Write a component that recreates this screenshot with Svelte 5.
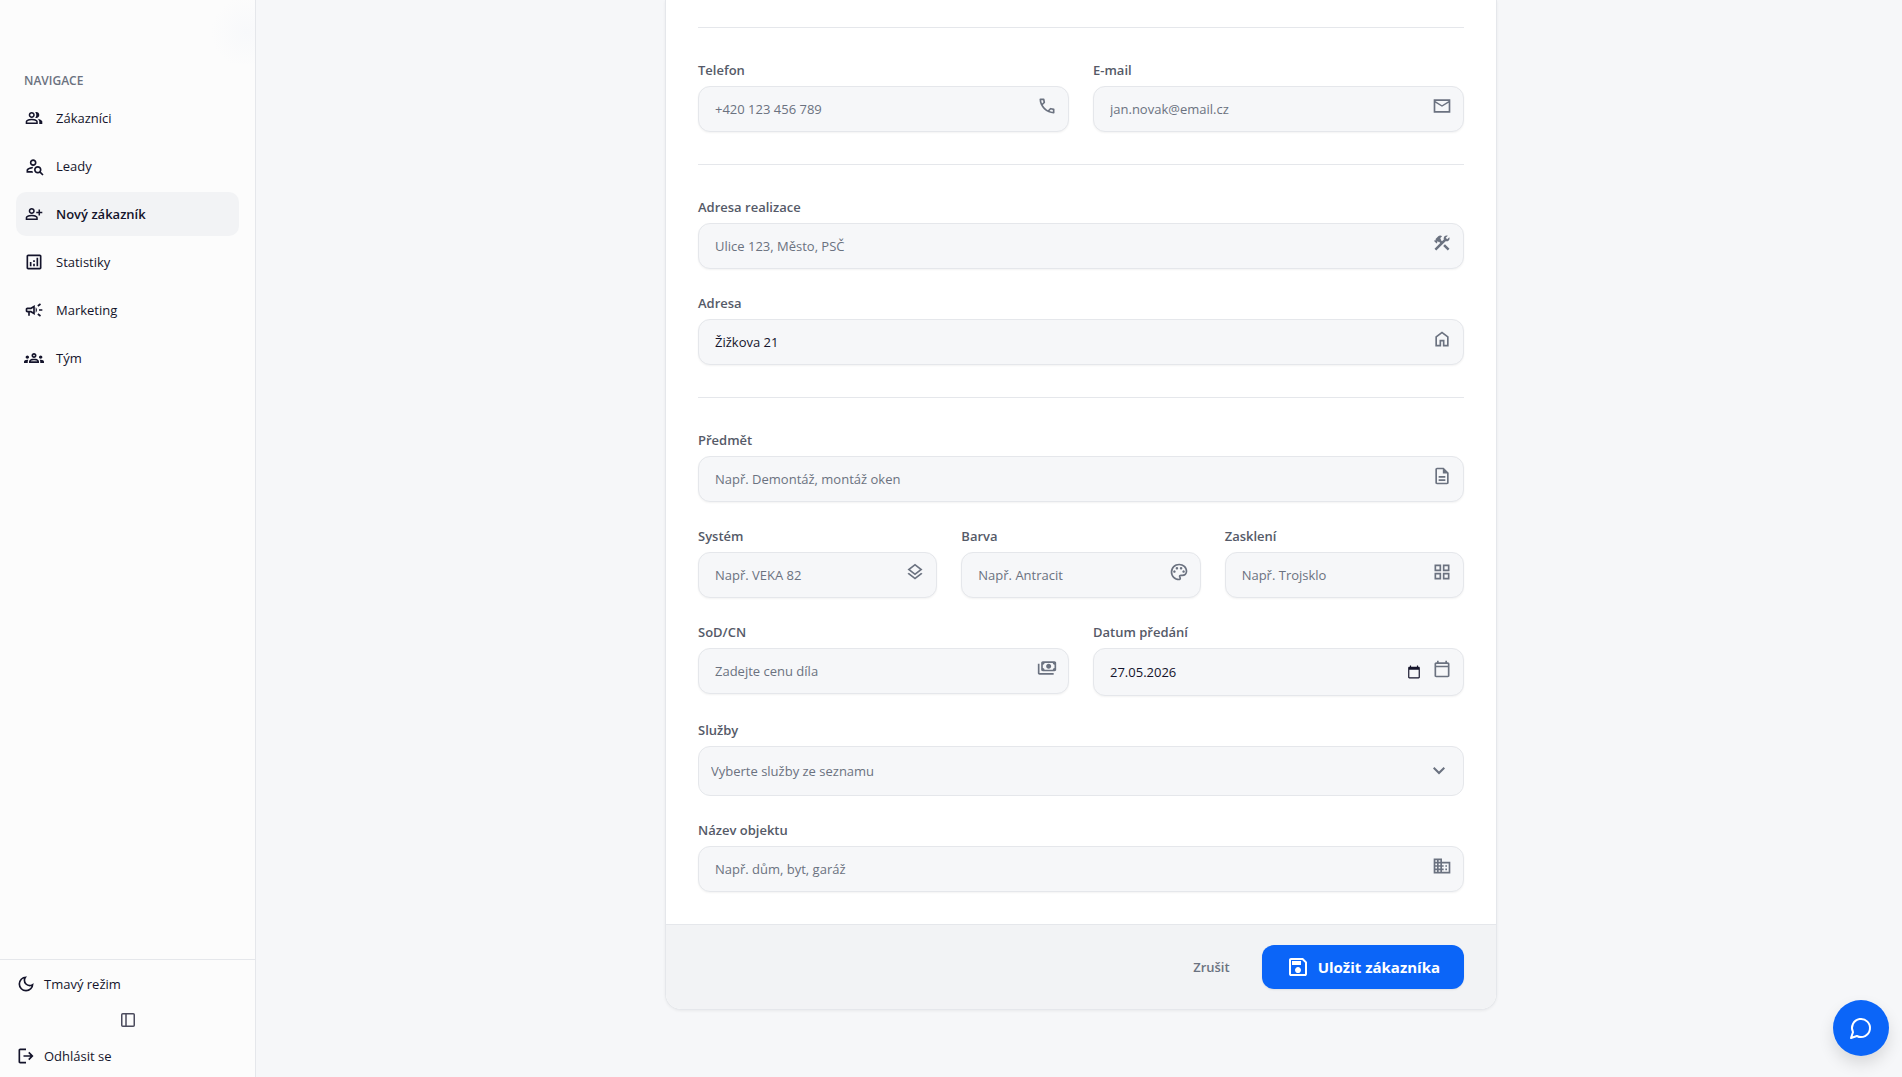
<script>
  const icons = {
    group: 'M40-160v-112q0-34 17.5-62.5T104-378q62-31 126-46.5T360-440q66 0 130 15.5T616-378q29 15 46.5 43.5T680-272v112H40Zm720 0v-120q0-44-24.5-84.5T666-434q51 6 96 20.5t84 35.5q36 20 55 44.5t19 53.5v120H760ZM360-480q-66 0-113-47t-47-113q0-66 47-113t113-47q66 0 113 47t47 113q0 66-47 113t-113 47Zm400-160q0 66-47 113t-113 47q-11 0-28-2.5t-28-5.5q27-32 41.5-71t14.5-81q0-42-14.5-81T544-792q14-5 28-6.5t28-1.5q66 0 113 47t47 113ZM120-240h480v-32q0-11-5.5-20T580-306q-54-27-109-40.5T360-360q-56 0-111 13.5T140-306q-9 5-14.5 14t-5.5 20v32Zm240-320q33 0 56.5-23.5T440-640q0-33-23.5-56.5T360-720q-33 0-56.5 23.5T280-640q0 33 23.5 56.5T360-560Z',
    search: 'M440-480q-66 0-113-47t-47-113q0-66 47-113t113-47q66 0 113 47t47 113q0 66-47 113t-113 47Zm0-80q33 0 56.5-23.5T520-640q0-33-23.5-56.5T440-720q-33 0-56.5 23.5T360-640q0 33 23.5 56.5T440-560ZM884-20 756-148q-21 12-45 20t-51 8q-75 0-127.5-52.5T480-300q0-75 52.5-127.5T660-480q75 0 127.5 52.5T840-300q0 27-8 51t-20 45L940-76l-56 56ZM660-200q42 0 71-29t29-71q0-42-29-71t-71-29q-42 0-71 29t-29 71q0 42 29 71t71 29Zm-540 40v-111q0-34 17-63t47-44q51-26 115-44t142-18q-12 18-20.5 38.5T407-359q-60 5-107 20.5T221-306q-10 5-15.5 14.5T200-271v31h207q5 22 13.5 42t20.5 38H120Z',
    personAdd: 'M720-400v-120H600v-80h120v-120h80v120h120v80H800v120h-80Zm-360-80q-66 0-113-47t-47-113q0-66 47-113t113-47q66 0 113 47t47 113q0 66-47 113t-113 47ZM40-160v-112q0-34 17.5-62.5T104-378q62-31 126-46.5T360-440q66 0 130 15.5T616-378q29 15 46.5 43.5T680-272v112H40Zm80-80h480v-32q0-11-5.5-20T580-306q-54-27-109-40.5T360-360q-56 0-111 13.5T140-306q-9 5-14.5 14t-5.5 20v32Zm240-320q33 0 56.5-23.5T440-640q0-33-23.5-56.5T360-720q-33 0-56.5 23.5T280-640q0 33 23.5 56.5T360-560Z',
    analytics: 'M280-280h80v-200h-80v200Zm320 0h80v-400h-80v400Zm-160 0h80v-120h-80v120Zm0-200h80v-80h-80v80ZM200-120q-33 0-56.5-23.5T120-200v-560q0-33 23.5-56.5T200-840h560q33 0 56.5 23.5T840-760v560q0 33-23.5 56.5T760-120H200Zm0-80h560v-560H200v560Z',
    campaign: 'M720-440v-80h160v80H720Zm48 280-128-96 48-64 128 96-48 64Zm-80-480-48-64 128-96 48 64-128 96ZM200-200v-160h-40q-33 0-56.5-23.5T80-440v-80q0-33 23.5-56.5T160-600h160l200-120v480L320-360h-40v160h-80Zm240-182v-196l-98 58H160v80h182l98 58Zm120 36v-268q27 24 43.5 58.5T620-480q0 41-16.5 75.5T560-346Z',
    groups: 'M0-240v-63q0-43 44-70t116-27q13 0 25 .5t23 2.5q-14 21-21 44t-7 48v65H0Zm240 0v-65q0-32 17.5-58.5T307-410q32-20 76.5-30t96.5-10q53 0 97.5 10t76.5 30q32 20 49 46.5t17 58.5v65H240Zm540 0v-65q0-26-6.5-49T754-397q11-2 22.5-2.5t23.5-.5q72 0 116 26.5t44 70.5v63H780Zm-455-80h311q-10-20-55.5-35T480-370q-55 0-100.5 15T325-320ZM160-440q-33 0-56.5-23.5T80-520q0-34 23.5-57t56.5-23q34 0 57 23t23 57q0 33-23 56.5T160-440Zm640 0q-33 0-56.5-23.5T720-520q0-34 23.5-57t56.5-23q34 0 57 23t23 57q0 33-23 56.5T800-440Zm-320-40q-50 0-85-35t-35-85q0-51 35-85.5t85-34.5q51 0 85.5 34.5T600-600q0 50-34.5 85T480-480Zm0-80q17 0 28.5-11.5T520-600q0-17-11.5-28.5T480-640q-17 0-28.5 11.5T440-600q0 17 11.5 28.5T480-560Z',
    moon: 'M480-120q-150 0-255-105T120-480q0-150 105-255t255-105q14 0 27.5 1t26.5 3q-41 29-65.5 75.5T444-660q0 90 63 153t153 63q55 0 101-24.5t75-65.5q2 13 3 26.5t1 27.5q0 150-105 255T480-120Zm0-80q88 0 158-48.5T740-375q-20 5-40 8t-40 3q-123 0-209.5-86.5T364-660q0-20 3-40t8-40q-78 32-126.5 102T200-480q0 116 82 198t198 82Z',
    logout: 'M200-120q-33 0-56.5-23.5T120-200v-560q0-33 23.5-56.5T200-840h280v80H200v560h280v80H200Zm440-160-55-58 102-102H360v-80h327L585-622l55-58 200 200-200 200Z',
    call: 'M798-120q-125 0-247-54.5T329-329Q229-429 174.5-551T120-798q0-18 12-30t30-12h162q14 0 25 9.5t13 22.5l26 140q2 16-1 27t-11 19l-97 98q20 37 47.5 71.5T387-386q31 31 65 57.5t72 48.5l94-94q9-9 23.5-13.5T670-390l138 28q14 4 23 14.5t9 23.5v162q0 18-12 30t-30 12ZM241-600l66-66-17-94h-89q5 41 14 81t26 79Zm358 358q39 17 79.5 27t81.5 13v-88l-94-19-67 67Z',
    mail: 'M80-160v-640h800v640H80Zm400-280L160-640v400h640v-400L480-440Zm0-80 320-200H160l320 200Z',
    tools: 'M756-120 537-339l84-84 219 219-84 84Zm-552 0-84-84 276-276-68-68-28 28-51-51v82l-28 28-121-121 28-28h82l-50-50 142-142q20-20 43-29t47-9q24 0 47 9t43 29l-92 92 50 50-28 28 68 68 90-90q-4-11-6.5-23t-2.5-24q0-59 40.5-99.5T701-841q15 0 28.5 3t27.5 9l-99 99 72 72 99-99q7 14 9.5 27.5T841-701q0 59-40.5 99.5T701-561q-12 0-24-2t-23-7L204-120Z',
    home: 'M240-200h120v-240h240v240h120v-360L480-740 240-560v360Zm-80 80v-480l320-240 320 240v480H520v-240h-80v240H160Z',
    doc: 'M320-240h320v-80H320v80Zm0-160h320v-80H320v80ZM240-80q-33 0-56.5-23.5T160-160v-640q0-33 23.5-56.5T240-880h320l240 240v480q0 33-23.5 56.5T720-80H240Zm280-520v-200H240v640h480v-440H520Z',
    layers: 'M480-118 120-398l66-50 294 228 294-228 66 50-360 280Zm0-202L120-600l360-280 360 280-360 280Zm0-102 230-178-230-178-230 178 230 178Z',
    palette: 'M480-80q-82 0-155-31.5t-127.5-86Q143-252 111.5-325T80-480q0-83 32.5-156t88-127Q256-817 330-848.5T488-880q80 0 151 27.5t124.5 76q53.5 48.5 85 115T880-518q0 115-70 176.5T640-280h-74q-9 0-12.5 5t-3.5 11q0 12 15 34.5t15 51.5q0 50-27.5 74T480-80ZM260-440q26 0 43-17t17-43q0-26-17-43t-43-17q-26 0-43 17t-17 43q0 26 17 43t43 17Zm120-160q26 0 43-17t17-43q0-26-17-43t-43-17q-26 0-43 17t-17 43q0 26 17 43t43 17Zm200 0q26 0 43-17t17-43q0-26-17-43t-43-17q-26 0-43 17t-17 43q0 26 17 43t43 17Zm120 160q26 0 43-17t17-43q0-26-17-43t-43-17q-26 0-43 17t-17 43q0 26 17 43t43 17ZM480-160q9 0 14.5-5t5.5-13q0-14-15-33t-15-57q0-42 29-67t71-25h70q66 0 113-38.5T800-518q0-121-92.5-201.5T488-800q-136 0-232 93t-96 227q0 133 93.5 226.5T480-160Z',
    grid: 'M120-520v-320h320v320H120Zm0 400v-320h320v320H120Zm400-400v-320h320v320H520Zm0 400v-320h320v320H520ZM200-600h160v-160H200v160Zm400 0h160v-160H600v160Zm0 400h160v-160H600v160Zm-400 0h160v-160H200v160Z',
    payments: 'M560-440q-50 0-85-35t-35-85q0-50 35-85t85-35q50 0 85 35t35 85q0 50-35 85t-85 35ZM280-320q-33 0-56.5-23.5T200-400v-320q0-33 23.5-56.5T280-800h560q33 0 56.5 23.5T920-720v320q0 33-23.5 56.5T840-320H280Zm80-80h400q0-33 23.5-56.5T840-480v-160q-33 0-56.5-23.5T760-720H360q0 33-23.5 56.5T280-640v160q33 0 56.5 23.5T360-400Zm440 240H120q-33 0-56.5-23.5T40-240v-440h80v440h680v80Z',
    calendar: 'M200-80q-33 0-56.5-23.5T120-160v-560q0-33 23.5-56.5T200-800h40v-80h80v80h320v-80h80v80h40q33 0 56.5 23.5T840-720v560q0 33-23.5 56.5T760-80H200Zm0-80h560v-400H200v400Zm0-480h560v-80H200v80Z',
    domain: 'M80-120v-720h400v160h400v560H80Zm80-80h80v-80h-80v80Zm0-160h80v-80h-80v80Zm0-160h80v-80h-80v80Zm0-160h80v-80h-80v80Zm160 480h80v-80h-80v80Zm0-160h80v-80h-80v80Zm0-160h80v-80h-80v80Zm0-160h80v-80h-80v80Zm160 480h320v-400H480v80h80v80h-80v80h80v80h-80v80Zm160-240v-80h80v80h-80Zm0 160v-80h80v80h-80Z',
    save: 'M840-680v480q0 33-23.5 56.5T760-120H200q-33 0-56.5-23.5T120-200v-560q0-33 23.5-56.5T200-840h480l160 160Zm-80 34L646-760H200v560h560v-446ZM480-240q50 0 85-35t35-85q0-50-35-85t-85-35q-50 0-85 35t-35 85q0 50 35 85t85 35ZM240-560h360v-160H240v160Z',
    expand: 'M480-345 240-585l56-56 184 184 184-184 56 56-240 240Z'
  };

  const nav = [
    { label: 'Zákazníci', icon: 'group', compact: true },
    { label: 'Leady', icon: 'search' },
    { label: 'Nový zákazník', icon: 'personAdd', compact: true, active: true },
    { label: 'Statistiky', icon: 'analytics' },
    { label: 'Marketing', icon: 'campaign' },
    { label: 'Tým', icon: 'groups' }
  ];
</script>

{#snippet icon(name, compact = false)}
  <svg class="icon" viewBox={compact ? '-50 -1010 1060 1060' : '0 -960 960 960'} fill="currentColor" aria-hidden="true">
    <path d={icons[name]} />
  </svg>
{/snippet}

{#snippet field(id, label, placeholder, iconName, value = '', type = 'text')}
  <div class="field">
    <label for={id}>{label}</label>
    <div class="control">
      <input {id} {type} {placeholder} {value} />
      <span class="adornment">{@render icon(iconName)}</span>
    </div>
  </div>
{/snippet}

<div class="app">
  <aside class="sidebar">
    <div class="brand"></div>
    <nav aria-label="Navigace">
      <p class="nav-title">NAVIGACE</p>
      <ul>
        {#each nav as item}
          <li>
            <a href="#{item.icon}" class:active={item.active} aria-current={item.active ? 'page' : undefined}>
              {@render icon(item.icon, item.compact)}
              {item.label}
            </a>
          </li>
        {/each}
      </ul>
    </nav>
    <div class="sidebar-footer">
      <button type="button">{@render icon('moon')}Tmavý režim</button>
      <button type="button" class="collapse" aria-label="Sbalit panel">
        <svg class="icon" viewBox="0 0 20 20" fill="none" stroke="currentColor" stroke-width="1.5" aria-hidden="true">
          <rect x="3.75" y="3.75" width="12.5" height="12.5" rx="1" />
          <path d="M8 4v12" />
        </svg>
      </button>
      <button type="button">{@render icon('logout')}Odhlásit se</button>
    </div>
  </aside>

  <main>
    <form class="card" onsubmit={(e) => e.preventDefault()}>
      <div class="card-body">
        <section>
          <div class="row two">
            {@render field('phone', 'Telefon', '+420 123 456 789', 'call', '', 'tel')}
            {@render field('email', 'E-mail', 'jan.novak@email.cz', 'mail', '', 'email')}
          </div>
        </section>
        <section>
          {@render field('site', 'Adresa realizace', 'Ulice 123, Město, PSČ', 'tools')}
          {@render field('address', 'Adresa', '', 'home', 'Žižkova 21')}
        </section>
        <section>
          {@render field('subject', 'Předmět', 'Např. Demontáž, montáž oken', 'doc')}
          <div class="row three">
            {@render field('system', 'Systém', 'Např. VEKA 82', 'layers')}
            {@render field('color', 'Barva', 'Např. Antracit', 'palette')}
            {@render field('glazing', 'Zasklení', 'Např. Trojsklo', 'grid')}
          </div>
          <div class="row two">
            {@render field('price', 'SoD/CN', 'Zadejte cenu díla', 'payments')}
            <div class="field">
              <label for="handover">Datum předání</label>
              <div class="control date">
                <input id="handover" type="text" inputmode="numeric" value="27.05.2026" />
                <button type="button" class="picker" aria-label="Otevřít kalendář">
                  <svg viewBox="0 0 24 24" fill="currentColor" aria-hidden="true">
                    <path d="M20 3h-1V1h-2v2H7V1H5v2H4c-1.1 0-2 .9-2 2v16c0 1.1.9 2 2 2h16c1.1 0 2-.9 2-2V5c0-1.1-.9-2-2-2zm0 18H4V8h16v13z" />
                  </svg>
                </button>
                <span class="adornment">{@render icon('calendar')}</span>
              </div>
            </div>
          </div>
          <div class="field">
            <label for="services">Služby</label>
            <div class="control choice">
              <select id="services">
                <option>Vyberte služby ze seznamu</option>
              </select>
              <span class="chevron">{@render icon('expand')}</span>
            </div>
          </div>
          {@render field('object', 'Název objektu', 'Např. dům, byt, garáž', 'domain')}
        </section>
      </div>
      <footer>
        <button type="button" class="cancel">Zrušit</button>
        <button type="submit" class="submit">{@render icon('save')}Uložit zákazníka</button>
      </footer>
    </form>
  </main>

  <button type="button" class="chat" aria-label="Otevřít chat">
    <svg viewBox="0 0 24 24" fill="none" stroke="currentColor" stroke-width="2" stroke-linecap="round" stroke-linejoin="round" aria-hidden="true">
      <path d="M7.9 20A9 9 0 1 0 4 16.1L2 22Z" />
    </svg>
  </button>
</div>

<style>
  :global(body) {
    background: #f6f7f9;
  }

  .app {
    --ink: #14142b;
    --muted: #6b7280;
    --line: #e5e7eb;
    --blue: #0b65f8;
    display: flex;
    gap: 4px;
    min-height: 100vh;
    font-family: 'Segoe UI', 'Open Sans', 'Noto Sans', sans-serif;
    font-size: 13px;
    line-height: 20px;
    color: var(--ink);
  }

  .app *,
  .app *::before {
    box-sizing: border-box;
  }

  button,
  input,
  select {
    font: inherit;
    color: inherit;
  }

  button {
    border: 0;
    background: none;
    cursor: pointer;
  }

  .icon {
    display: block;
    flex: none;
    width: 20px;
    height: 20px;
  }

  .sidebar {
    position: sticky;
    top: 0;
    display: flex;
    flex: none;
    flex-direction: column;
    width: 256px;
    height: 100vh;
    background: #fcfcfc;
    border-right: 1px solid var(--line);
  }

  .brand {
    height: 64px;
    background: radial-gradient(circle 36px at calc(100% - 8px) 50%, #f8f9fb, #fcfcfc);
  }

  nav {
    flex: 1;
    padding: 0 16px;
  }

  .nav-title {
    margin: 0;
    padding: 1px 8px 0;
    font-size: 12px;
    font-weight: 600;
    line-height: 31px;
    color: var(--muted);
  }

  ul {
    display: flex;
    flex-direction: column;
    gap: 4px;
    margin: 0;
    padding: 0;
    list-style: none;
  }

  a {
    display: flex;
    align-items: center;
    gap: 12px;
    height: 44px;
    padding: 0 8px;
    border-radius: 10px;
    color: inherit;
    text-decoration: none;
  }

  a.active {
    background: #f2f3f5;
    font-weight: 600;
  }

  .sidebar-footer {
    display: flex;
    flex-direction: column;
    padding: 6px 0 3px;
    border-top: 1px solid var(--line);
  }

  .sidebar-footer button {
    display: flex;
    align-items: center;
    gap: 8px;
    height: 36px;
    padding: 0 16px;
  }

  .sidebar-footer .collapse {
    justify-content: center;
    color: #4b4b5d;
  }

  main {
    flex: 1;
    padding: 0 32px 67px;
  }

  .card {
    max-width: 832px;
    margin: 0 auto;
    overflow: hidden;
    background: #fff;
    border: 1px solid var(--line);
    border-top: 0;
    border-radius: 0 0 16px 16px;
    box-shadow: 0 1px 3px rgb(0 0 0 / 6%);
  }

  .card-body {
    padding: 27px 32px 0;
  }

  section {
    display: flex;
    flex-direction: column;
    gap: 24px;
    padding: 32px 0;
    border-top: 1px solid var(--line);
  }

  .row {
    display: grid;
    gap: 24px;
    align-items: start;
  }

  .two {
    grid-template-columns: repeat(2, minmax(0, 1fr));
  }

  .three {
    grid-template-columns: repeat(3, minmax(0, 1fr));
  }

  .field {
    display: flex;
    flex-direction: column;
    gap: 6px;
  }

  label {
    font-weight: 600;
    color: #555a68;
  }

  .control {
    position: relative;
    display: flex;
    height: 46px;
  }

  input,
  select {
    width: 100%;
    margin: 0;
    padding: 0 44px 0 16px;
    background: #f6f7f9;
    border: 1px solid var(--line);
    border-radius: 12px;
    box-shadow: 0 1px 2px rgb(0 0 0 / 5%);
    outline: none;
  }

  input::placeholder {
    color: var(--muted);
    opacity: 1;
  }

  .adornment {
    position: absolute;
    top: 10px;
    right: 12px;
    color: var(--muted);
    pointer-events: none;
  }

  .date {
    height: 48px;
  }

  .date .adornment {
    top: 11px;
  }

  .picker {
    position: absolute;
    top: 17px;
    right: 43px;
    padding: 0;
  }

  .picker svg {
    display: block;
    width: 14px;
    height: 14px;
  }

  .choice {
    height: 50px;
  }

  select {
    appearance: none;
    padding-left: 12px;
    color: var(--muted);
    box-shadow: none;
  }

  .chevron {
    position: absolute;
    top: 13px;
    right: 13px;
    color: var(--muted);
    pointer-events: none;
  }

  .chevron .icon,
  .chevron :global(.icon) {
    width: 24px;
    height: 24px;
  }

  footer {
    display: flex;
    justify-content: flex-end;
    gap: 8px;
    padding: 20px 32px;
    background: #f2f3f5;
    border-top: 1px solid var(--line);
  }

  .cancel {
    padding: 0 24px;
    font-weight: 600;
    color: var(--muted);
  }

  .submit {
    display: flex;
    align-items: center;
    gap: 8px;
    height: 44px;
    padding: 0 24px;
    background: var(--blue);
    border-radius: 12px;
    box-shadow: 0 1px 2px rgb(0 0 0 / 8%);
    font-size: 15px;
    font-weight: 700;
    color: #fff;
  }

  .submit .icon {
    width: 24px;
    height: 24px;
  }

  .chat {
    position: fixed;
    right: 13px;
    bottom: 21px;
    display: grid;
    place-items: center;
    width: 56px;
    height: 56px;
    padding: 0;
    background: var(--blue);
    border-radius: 50%;
    box-shadow: 0 8px 16px rgb(0 0 0 / 12%);
    color: #fff;
  }

  .chat svg {
    width: 24px;
    height: 24px;
  }
</style>
